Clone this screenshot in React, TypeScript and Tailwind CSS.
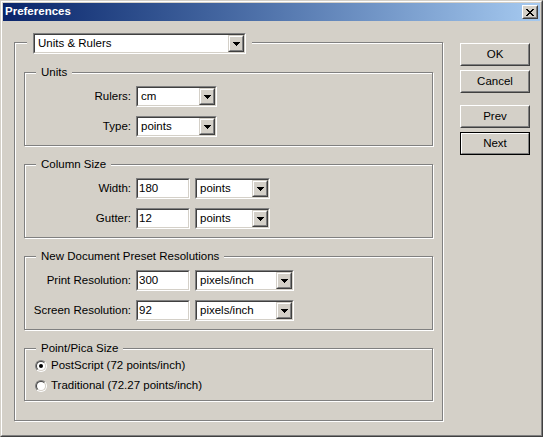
import React from "react";

// Win2000 classic "Preferences" dialog

const Sunken: React.FC<{ className: string; children?: React.ReactNode }> = ({ className, children }) => (
  <div className={`border border-t-[#808080] border-l-[#808080] border-r-white border-b-white ${className}`}>
    <div className="h-full flex items-center border border-t-[#404040] border-l-[#404040] border-r-[#d4d0c8] border-b-[#d4d0c8] bg-white">
      {children}
    </div>
  </div>
);

const ArrowButton = () => (
  <div className="h-full w-[16px] border border-t-[#d4d0c8] border-l-[#d4d0c8] border-r-[#404040] border-b-[#404040]">
    <div className="h-full flex items-center justify-center border border-t-white border-l-white border-r-[#808080] border-b-[#808080] bg-[#d4d0c8]">
      <svg width="7" height="4" viewBox="0 0 7 4" shapeRendering="crispEdges">
        <rect x="0" y="0" width="7" height="1" fill="#000" />
        <rect x="1" y="1" width="5" height="1" fill="#000" />
        <rect x="2" y="2" width="3" height="1" fill="#000" />
        <rect x="3" y="3" width="1" height="1" fill="#000" />
      </svg>
    </div>
  </div>
);

const Select: React.FC<{ value: string; className: string }> = ({ value, className }) => (
  <Sunken className={className}>
    <span className="flex-1 pl-[3px] whitespace-nowrap">{value}</span>
    <ArrowButton />
  </Sunken>
);

const Input: React.FC<{ value: string }> = ({ value }) => (
  <Sunken className="w-[54px] h-[21px]">
    <span className="pl-[1px]">{value}</span>
  </Sunken>
);

const Group: React.FC<{ title: string; className: string; children?: React.ReactNode }> = ({
  title,
  className,
  children
}) => (
  <div className={`w-[409px] ml-[9px] border border-[#808080] shadow-[1px_1px_0_#fff,inset_1px_1px_0_#fff] ${className}`}>
    <div className="-mt-[8px] ml-[11px] w-fit px-[5px] h-[14px] leading-[14px] bg-[#d4d0c8]">{title}</div>
    {children}
  </div>
);

const Row: React.FC<{ label: string; className?: string; children?: React.ReactNode }> = ({
  label,
  className = "",
  children
}) => (
  <div className={`flex items-center gap-[5px] ${className}`}>
    <span className="w-[106px] text-right whitespace-nowrap">{label}</span>
    {children}
  </div>
);

const Radio: React.FC<{ checked?: boolean; label: string; className?: string }> = ({ checked, label, className = "" }) => (
  <div className={`flex items-center h-[16px] ml-[10px] ${className}`}>
    <span className="w-[12px] h-[12px] rounded-full border border-t-[#808080] border-l-[#808080] border-r-white border-b-white">
      <span className="w-full h-full flex items-center justify-center rounded-full border border-t-[#404040] border-l-[#404040] border-r-[#d4d0c8] border-b-[#d4d0c8] bg-white">
        {checked && <span className="w-[4px] h-[4px] rounded-full bg-black" />}
      </span>
    </span>
    <span className="ml-[4px] whitespace-nowrap">{label}</span>
  </div>
);

const Button: React.FC<{ label: string; className?: string; isDefault?: boolean }> = ({ label, className = "", isDefault }) =>
  isDefault ? (
    <div className={`w-[70px] h-[23px] border border-black ${className}`}>
      <div className="h-full flex items-center justify-center border border-t-white border-l-white border-r-[#808080] border-b-[#808080]">
        {label}
      </div>
    </div>
  ) : (
    <div className={`w-[70px] h-[23px] border border-t-white border-l-white border-r-[#404040] border-b-[#404040] ${className}`}>
      <div className="h-full flex items-center justify-center border border-t-[#d4d0c8] border-l-[#d4d0c8] border-r-[#808080] border-b-[#808080]">
        {label}
      </div>
    </div>
  );

export default function App() {
  return (
    <div className="w-[543px] h-[437px] bg-[#d4d0c8] text-black font-['Liberation_Sans',Arial,sans-serif] text-[11.5px] leading-none select-none">
      <div className="w-full h-full border border-t-[#d4d0c8] border-l-[#d4d0c8] border-r-[#404040] border-b-[#404040]">
        <div className="w-full h-full p-[1px] border border-t-white border-l-white border-r-[#808080] border-b-[#808080]">
          {/* title bar */}
          <div className="h-[18px] flex items-center justify-between bg-linear-to-r from-[#0a246a] to-[#a6caf0]">
            <span className="pl-[2px] text-white font-bold">Preferences</span>
            <div className="mr-[2px] w-[16px] h-[14px] border border-t-white border-l-white border-r-[#404040] border-b-[#404040] bg-[#d4d0c8]">
              <div className="h-full flex items-center justify-center border border-t-[#d4d0c8] border-l-[#d4d0c8] border-r-[#808080] border-b-[#808080]">
                <svg width="8" height="7" viewBox="0 0 8 7" shapeRendering="crispEdges">
                  <path
                    d="M0 0h2v1h-2zM6 0h2v1h-2zM1 1h2v1h-2zM5 1h2v1h-2zM2 2h4v1h-4zM3 3h2v1h-2zM2 4h4v1h-4zM1 5h2v1h-2zM5 5h2v1h-2zM0 6h2v1h-2zM6 6h2v1h-2z"
                    fill="#000"
                  />
                </svg>
              </div>
            </div>
          </div>

          {/* body */}
          <div className="flex items-start">
            <div className="mt-[21px] ml-[11px] w-[429px] h-[379px] border border-[#808080] shadow-[1px_1px_0_#fff,inset_1px_1px_0_#fff]">
              <div className="-mt-[10px] ml-[12px] w-fit px-[6px] bg-[#d4d0c8]">
                <Select value="Units & Rulers" className="w-[213px] h-[21px]" />
              </div>

              <Group title="Units" className="mt-[18px] h-[74px]">
                <Row label="Rulers:" className="mt-[7px]">
                  <Select value="cm" className="w-[81px] h-[21px]" />
                </Row>
                <Row label="Type:" className="mt-[9px]">
                  <Select value="points" className="w-[81px] h-[21px]" />
                </Row>
              </Group>

              <Group title="Column Size" className="mt-[18px] h-[74px]">
                <Row label="Width:" className="mt-[7px]">
                  <Input value="180" />
                  <Select value="points" className="w-[75px] h-[21px]" />
                </Row>
                <Row label="Gutter:" className="mt-[9px]">
                  <Input value="12" />
                  <Select value="points" className="w-[75px] h-[21px]" />
                </Row>
              </Group>

              <Group title="New Document Preset Resolutions" className="mt-[18px] h-[74px]">
                <Row label="Print Resolution:" className="mt-[7px]">
                  <Input value="300" />
                  <Select value="pixels/inch" className="w-[99px] h-[21px]" />
                </Row>
                <Row label="Screen Resolution:" className="mt-[9px]">
                  <Input value="92" />
                  <Select value="pixels/inch" className="w-[99px] h-[21px]" />
                </Row>
              </Group>

              <Group title="Point/Pica Size" className="mt-[18px] h-[53px]">
                <Radio checked label="PostScript (72 points/inch)" className="mt-[3px]" />
                <Radio label="Traditional (72.27 points/inch)" className="mt-[4px]" />
              </Group>
            </div>

            <div className="ml-[17px] mt-[22px] flex flex-col">
              <Button label="OK" />
              <Button label="Cancel" className="mt-[4px]" />
              <Button label="Prev" className="mt-[12px]" />
              <Button label="Next" className="mt-[4px]" isDefault />
            </div>
          </div>
        </div>
      </div>
    </div>
  );
}
